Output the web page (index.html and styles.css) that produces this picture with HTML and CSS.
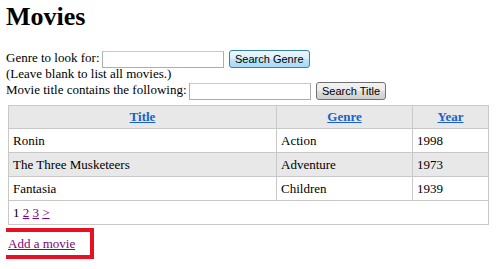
FILE: index.html
```html
<!DOCTYPE html>
<html lang="en">
<head>
    <meta charset="UTF-8">
    <title>Movies</title>
    <link rel="stylesheet" href="styles.css">
</head>
<body>

<h1>Movies</h1>
<form class="search-form">
    <div class="search-line">
        Genre to look for: <input type="text" class="search-box" name="genre">
        <button type="button" class="btn btn-focus">Search Genre</button>
    </div>
    <div class="search-line">(Leave blank to list all movies.)</div>
    <div class="search-line">
        Movie title contains the following: <input type="text" class="search-box" name="title">
        <button type="button" class="btn">Search Title</button>
    </div>
</form>

<table class="grid">
    <thead>
        <tr>
            <th class="col-title"><a href="#">Title</a></th>
            <th class="col-genre"><a href="#">Genre</a></th>
            <th class="col-year"><a href="#">Year</a></th>
        </tr>
    </thead>
    <tbody>
        <tr>
            <td>Ronin</td>
            <td>Action</td>
            <td>1998</td>
        </tr>
        <tr class="alt">
            <td>The Three Musketeers</td>
            <td>Adventure</td>
            <td>1973</td>
        </tr>
        <tr>
            <td>Fantasia</td>
            <td>Children</td>
            <td>1939</td>
        </tr>
        <tr class="pager">
            <td colspan="3">1 <a href="#">2</a> <a href="#">3</a> <a href="#">&gt;</a></td>
        </tr>
    </tbody>
</table>

<div class="highlight">
    <a href="#" class="visited">Add a movie</a>
</div>

</body>
</html>
```

FILE: styles.css
```css
body {
    font-family: "Liberation Serif", "Times New Roman", serif;
    font-size: 13px;
    color: #000;
    background-color: #fff;
    margin: 0 6px;
}
h1 {
    font-size: 26px;
    font-weight: bold;
    margin: 2px 0 18px 0;
    line-height: 30px;
}
.search-form {
    margin: 0;
}
.search-line {
    height: 16px;
    line-height: 16px;
    white-space: nowrap;
}
.search-box {
    width: 116px;
    height: 13px;
    padding: 1px 2px;
    margin: 0 1px 0 -1px;
    border: 1px solid #abadb3;
    border-top-color: #c5c7ce;
    font-size: 12px;
    vertical-align: middle;
}
.btn {
    font-family: "Liberation Sans", Arial, sans-serif;
    font-size: 11px;
    height: 18px;
    line-height: 14px;
    padding: 0 5px;
    margin: 0 0 0 1px;
    color: #000;
    border: 1px solid #707070;
    border-radius: 3px;
    background: linear-gradient(#f2f2f2 0%, #ebebeb 50%, #dddddd 51%, #cfcfcf 100%);
    vertical-align: middle;
}
.btn-focus {
    border-color: #3c7fb1;
    background: linear-gradient(#eaf6fd 0%, #d9f0fc 50%, #bee6fd 51%, #a7d9f5 100%);
}
.grid {
    border-collapse: collapse;
    width: 481px;
    margin: 7px 0 3px 2px;
    border: 1px solid #c8c8c8;
}
.grid th,
.grid td {
    border: 1px solid #c8c8c8;
    padding: 4px 4px;
    height: 15px;
    line-height: 15px;
    text-align: left;
}
.grid th {
    background-color: #e8e8e8;
    text-align: center;
    height: 14px;
    line-height: 14px;
}
.grid th a {
    color: #1a5fcf;
}
.col-title {
    width: 259px;
}
.col-genre {
    width: 127px;
}
.grid tr.alt td {
    background-color: #e8e8e8;
}
.pager a,
a.visited {
    color: #800080;
}
.highlight {
    display: inline-block;
    margin-left: -6px;
    padding: 4px 15px 4px 4px;
    border: 4px solid #e81123;
    line-height: 15px;
}
```
